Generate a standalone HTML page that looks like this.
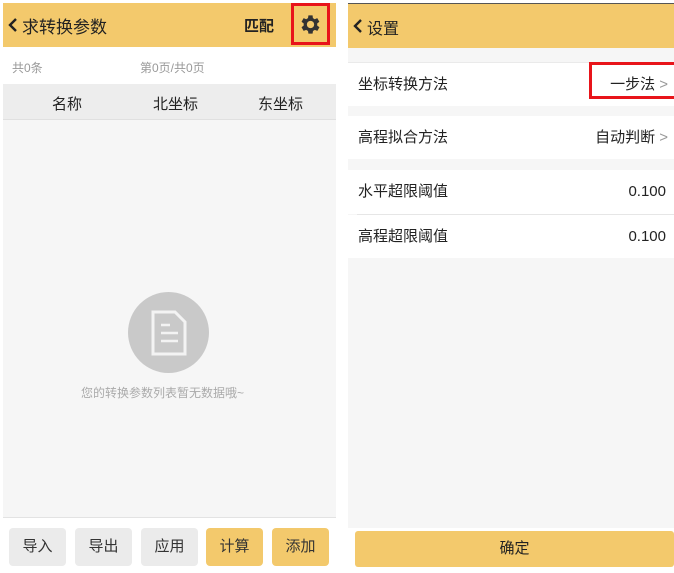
<!DOCTYPE html>
<html><head><meta charset="utf-8"><style>
*{margin:0;padding:0;box-sizing:border-box}
body{width:674px;height:573px;background:#fff;position:relative;overflow:hidden;font-family:"Liberation Sans","Noto Sans CJK SC",sans-serif;color:#222}
.a{position:absolute}
.y{background:#f3c96c}
.btn{position:absolute;top:528px;height:38px;width:57px;border-radius:4px;background:#ebebeb;font-size:15px;color:#333;text-align:center;line-height:38px}
.btn.g{background:#f3c96c}
.row{position:absolute;left:348px;width:326px;background:#fff;font-size:15px;color:#222}
.row .l{position:absolute;left:10px;top:0}
.row .r{position:absolute;right:6px;top:0}
</style></head><body>
<div class="a y" style="left:3px;top:3px;width:333px;height:44px"></div>
<svg class="a" style="left:8px;top:18px" width="10" height="14"><path d="M8 1L2 7l6 6" stroke="#222" stroke-width="2.4" fill="none"/></svg>
<div class="a" style="left:22px;top:13px;font-size:17px">求转换参数</div>
<div class="a" style="left:244px;top:15px;font-size:15px;font-weight:bold">匹配</div>
<svg class="a" style="left:298px;top:12px" width="25" height="25" viewBox="0 0 24 24"><path fill="#333" d="M19.4 13a7.5 7.5 0 0 0 0-2l2.1-1.6-2-3.5-2.5 1a7.3 7.3 0 0 0-1.7-1L15 3.2h-4l-.4 2.7a7.3 7.3 0 0 0-1.7 1l-2.5-1-2 3.5L6.5 11a7.5 7.5 0 0 0 0 2l-2.1 1.6 2 3.5 2.5-1a7.3 7.3 0 0 0 1.7 1l.4 2.7h4l.4-2.7a7.3 7.3 0 0 0 1.7-1l2.5 1 2-3.5zM13 15.5a3.5 3.5 0 1 1 0-7 3.5 3.5 0 0 1 0 7z" transform="translate(-1 0)"/></svg>
<div class="a" style="left:291px;top:3px;width:39px;height:42px;border:3px solid #e8141a"></div>
<div class="a" style="left:3px;top:47px;width:333px;height:37px;background:#fff"></div>
<div class="a" style="left:12px;top:59px;font-size:12px;color:#999">共0条</div>
<div class="a" style="left:140px;top:59px;font-size:12px;color:#999">第0页/共0页</div>
<div class="a" style="left:3px;top:84px;width:333px;height:36px;background:#ededed;border-bottom:1px solid #e0e0e0"></div>
<div class="a" style="left:52px;top:93px;font-size:15px">名称</div>
<div class="a" style="left:153px;top:93px;font-size:15px">北坐标</div>
<div class="a" style="left:258px;top:93px;font-size:15px">东坐标</div>
<div class="a" style="left:3px;top:120px;width:333px;height:398px;background:#f6f6f6;border-bottom:1px solid #e3e3e3"></div>
<div class="a" style="left:128px;top:292px;width:81px;height:81px;border-radius:50%;background:#c9c9c9"></div>
<svg class="a" style="left:150px;top:310px" width="38" height="46" viewBox="0 0 38 46"><path d="M3 2h22l10 10v32H3z" fill="none" stroke="#f3f3f3" stroke-width="3"/><path d="M11 15h9M11 23h17M11 31h17" stroke="#f3f3f3" stroke-width="2.5"/></svg>
<div class="a" style="left:81px;top:384px;font-size:12px;color:#aaa">您的转换参数列表暂无数据哦~</div>
<div class="btn" style="left:9px">导入</div>
<div class="btn" style="left:75px">导出</div>
<div class="btn" style="left:141px">应用</div>
<div class="btn g" style="left:206px">计算</div>
<div class="btn g" style="left:272px">添加</div>
<div class="a" style="left:348px;top:48px;width:326px;height:480px;background:#f6f6f6"></div>
<div class="a y" style="left:348px;top:3px;width:326px;height:45px;border-top:1px solid #555"></div>
<svg class="a" style="left:353px;top:19px" width="10" height="14"><path d="M8 1L2 7l6 6" stroke="#222" stroke-width="2.4" fill="none"/></svg>
<div class="a" style="left:367px;top:15px;font-size:16px">设置</div>
<div class="row" style="top:62px;height:44px;line-height:44px;border-top:1px solid #eaeaea"><span class="l">坐标转换方法</span><span class="r">一步法 <span style="color:#999">&gt;</span></span></div>
<div class="row" style="top:116px;height:43px;line-height:43px"><span class="l">高程拟合方法</span><span class="r">自动判断 <span style="color:#999">&gt;</span></span></div>
<div class="row" style="top:170px;height:44px;line-height:44px"><span class="l">水平超限阈值</span><span class="r" style="right:8px">0.100</span></div>
<div class="a" style="left:357px;top:214px;width:317px;height:1px;background:#e6e6e6"></div>
<div class="row" style="top:215px;height:43px;line-height:43px"><span class="l">高程超限阈值</span><span class="r" style="right:8px">0.100</span></div>
<div class="a" style="left:589px;top:62px;width:85px;height:37px;border:3px solid #e8141a;border-right:none"></div>
<div class="a" style="left:355px;top:531px;width:319px;height:36px;background:#f3c96c;border-radius:3px;text-align:center;line-height:36px;font-size:15px">确定</div>
</body></html>
